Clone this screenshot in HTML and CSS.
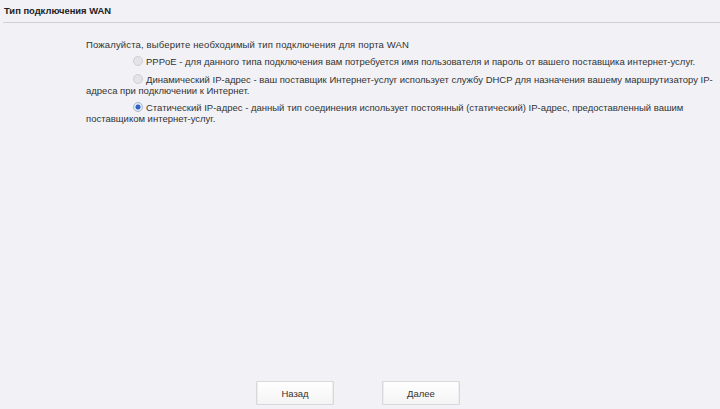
FILE: index.html
```html
<!DOCTYPE html>
<html>
<head>
<meta charset="utf-8">
<link rel="stylesheet" href="styles.css">
</head>
<body>
<div class="page">
  <div class="title">Тип подключения WAN</div>
  <div class="content">
    <p class="intro">Пожалуйста, выберите необходимый тип подключения для порта WAN</p>
    <p class="opt"><span class="radio"></span>PPPoE - для данного типа подключения вам потребуется имя пользователя и пароль от вашего поставщика интернет-услуг.</p>
    <p class="opt"><span class="radio"></span>Динамический IP-адрес - ваш поставщик Интернет-услуг использует службу DHCP для назначения вашему маршрутизатору IP-<wbr>адреса при подключении к Интернет.</p>
    <p class="opt"><span class="radio checked"></span>Статический IP-адрес - данный тип соединения использует постоянный (статический) IP-адрес, предоставленный вашим поставщиком интернет-услуг.</p>
  </div>
  <div class="buttons">
    <button class="btn">Назад</button>
    <button class="btn">Далее</button>
  </div>
</div>
</body>
</html>
```
FILE: styles.css
```css
html, body {
  margin: 0;
  padding: 0;
  background: #f1f1f6;
}
body {
  font-family: "Liberation Sans", Arial, sans-serif;
  font-size: 9.5px;
  color: #333;
}
.page {
  height: 409px;
  display: flex;
  flex-direction: column;
}
.title {
  font-weight: bold;
  font-size: 9.4px;
  color: #222;
  line-height: 12px;
  padding: 5px 0 5px 1px;
  margin-left: 3px;
  border-bottom: 1px solid #cfcfd4;
}
.content {
  flex: 1;
  padding: 0 2px 0 86px;
}
.intro {
  font-size: 9.5px;
  letter-spacing: 0.15px;
  margin: 16px 0 6px 0;
  line-height: 11px;
}
.opt {
  margin: 0 0 6px 0;
  line-height: 11px;
  text-indent: 47px;
}
.opt + .opt {
  margin-top: 7px;
}
.opt + .opt + .opt {
  margin-top: 6px;
}
.radio {
  display: inline-block;
  box-sizing: border-box;
  width: 10px;
  height: 10px;
  border-radius: 50%;
  border: 1px solid #cfcfd3;
  background: #e4e4e7;
  margin-right: 3px;
  vertical-align: -1px;
  text-indent: 0;
}
.radio.checked {
  border-color: #a9bad6;
  background: radial-gradient(circle, #2f63c8 0 2.2px, #dfe6f2 2.8px);
}
.buttons {
  display: flex;
  justify-content: center;
  gap: 48px;
  padding: 0 4px 4px 0;
}
.btn {
  width: 78px;
  height: 24px;
  font-family: "Liberation Sans", Arial, sans-serif;
  font-size: 9.5px;
  color: #333;
  background: linear-gradient(#ffffff, #f4f4f4);
  border: 1px solid #d8d8dc;
  box-shadow: inset 1px 0 0 #eee, inset -1px 0 0 #eee;
  border-radius: 1px;
  padding: 0;
}
```
